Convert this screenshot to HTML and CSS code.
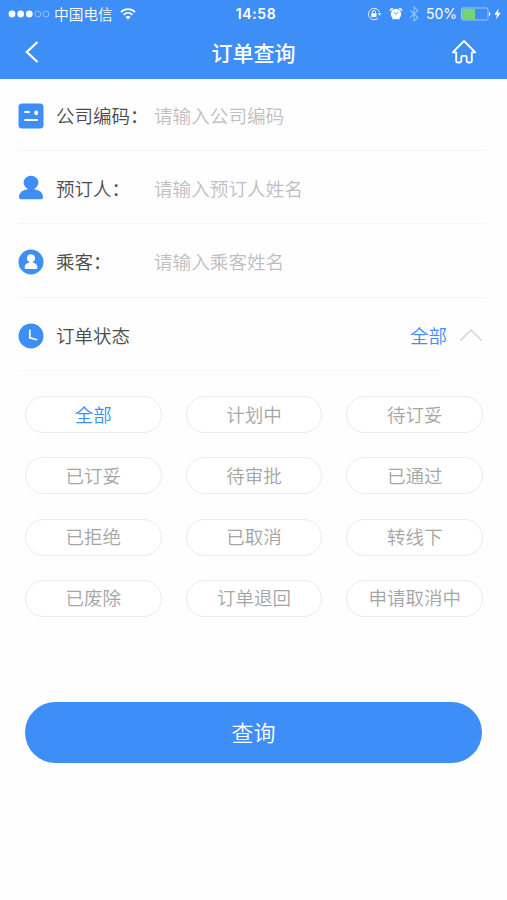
FILE: index.html
```
<!DOCTYPE html>
<html lang="zh-CN">
<head>
  <meta charset="UTF-8" />
  <meta name="viewport" content="width=device-width, initial-scale=1.0"/>
  <title>订单查询</title>
  <link rel="stylesheet" href="styles.css">
</head>
<body>
  <header class="header">
    <!-- Status bar -->
    <div class="status-bar">
      <div class="status-left">
        <svg class="signal" width="42" height="10" viewBox="0 0 42 10">
          <g fill="#fff"><circle cx="4" cy="5" r="3.4"/><circle cx="12.7" cy="5" r="3.4"/><circle cx="21.3" cy="5" r="3.4"/></g>
          <g fill="none" stroke="#a5ccff" stroke-width="0.8"><circle cx="29.8" cy="5" r="3"/><circle cx="38" cy="5" r="3"/></g>
        </svg>
        <span class="carrier">中国电信</span>
        <svg class="wifi" width="16" height="12" viewBox="0 0 16 12" fill="none" stroke="#fff" stroke-width="1.7">
          <path d="M1 4.2C5 .2 11 .2 15 4.2M3.6 6.8c2.6-2.5 6.2-2.5 8.8 0"/>
          <path d="M8 11.5 5.4 8.9c1.5-1.3 3.7-1.3 5.2 0z" fill="#fff" stroke="none"/>
        </svg>
      </div>
      <span class="time">14:58</span>
      <div class="status-right">
        <svg class="lock" width="15" height="14" viewBox="0 0 15 14" fill="none" stroke="#e4f0ff" stroke-width="1">
          <path d="M11 11.3A5.7 5.7 0 1 1 12.5 5"/>
          <path d="M10.6 6.3h3.8l-1.9 2.5z" fill="#fff" stroke="none"/>
          <path d="M5.3 6.5V5a1.6 1.6 0 0 1 3.2 0v1.5"/>
          <rect x="4.3" y="6.2" width="5.2" height="3.9" fill="#fff" stroke="none"/>
        </svg>
        <svg class="alarm" width="14" height="13" viewBox="0 0 14 13">
          <circle cx="7" cy="7" r="5.2" fill="#fff"/>
          <path d="M1.5 3.9a1.8 1.8 0 0 1 2.5-2M12.5 3.9a1.8 1.8 0 0 0-2.5-2" fill="none" stroke="#fff" stroke-width="1.6"/>
          <path d="M3.6 12.4l1-1.3M10.4 12.4l-1-1.3" stroke="#fff" stroke-width="1.3"/>
          <path d="M5.2 5.6 7 7.3l2.4-2.2" fill="none" stroke="#3e8ef7" stroke-width=".9"/>
        </svg>
        <svg class="bluetooth" width="10" height="16" viewBox="0 0 10 16" fill="none" stroke="#91c0ff" stroke-width="1.1">
          <path d="M1 4.5l8 7L5 15V1l4 3.5-8 7"/>
        </svg>
        <span class="percent">50%</span>
        <svg class="battery" width="30" height="14" viewBox="0 0 30 14">
          <rect x=".5" y="1" width="26.5" height="12" rx="1.5" fill="none" stroke="#9fc8ff" stroke-width="1"/>
          <rect x="1.2" y="1.8" width="12.8" height="10.4" fill="#75d572"/>
          <path d="M28 5v4c1.7-.3 1.7-3.7 0-4z" fill="#fff"/>
        </svg>
        <svg class="bolt" width="7" height="12" viewBox="0 0 7 12" fill="#fff">
          <path d="M4.6 0.5 0.3 6.8h2.6l-.8 4.7 4.6-6.7H4z"/>
        </svg>
      </div>
    </div>

    <!-- Title bar -->
    <div class="nav">
      <svg class="back" width="14" height="24" viewBox="0 0 14 24" fill="none" stroke="#fff" stroke-width="2.3">
        <path d="M12.5 2 1.8 12l10.7 10"/>
      </svg>
      <h1>订单查询</h1>
      <svg class="home" width="26" height="26" viewBox="0 0 26 26" fill="none" stroke="#fff" stroke-width="1.9" stroke-linejoin="round" stroke-linecap="round">
        <path d="M5.2 13.4H1.8L13 1.9l11.2 11.5h-3.4v8.6q0 1.5-1.5 1.5h-2.1q-1.5 0-1.5-1.5v-3.6q0-1.5-1.4-1.5h-2.6q-1.4 0-1.4 1.5V22q0 1.5-1.5 1.5H6.7q-1.5 0-1.5-1.5z"/>
      </svg>
    </div>
  </header>

  <main>
    <div class="row">
      <svg class="icon" width="26" height="26" viewBox="0 0 26 26">
        <rect x=".5" y=".5" width="25" height="25" rx="3.5" fill="#3e8ef7"/>
        <path d="M6.3 9h5.5M6.3 17h13.5" stroke="#fff" stroke-width="1.9"/>
        <ellipse cx="18.2" cy="9.8" rx="2" ry="2.4" fill="#fff"/>
      </svg>
      <label for="company">公司编码：</label>
      <input id="company" type="text" placeholder="请输入公司编码">
    </div>
    <div class="row">
      <svg class="icon" width="26" height="26" viewBox="0 0 26 26" fill="#3e8ef7">
        <ellipse cx="13" cy="7.4" rx="7.4" ry="6.7"/>
        <path d="M9.5 12h7v2.2c5.2.8 8.5 3.6 8.5 7.8 0 1.5-1 2.3-2.5 2.3h-19C2 24.3 1 23.5 1 22c0-4.2 3.3-7 8.5-7.8z"/>
      </svg>
      <label for="booker">预订人：</label>
      <input id="booker" type="text" placeholder="请输入预订人姓名">
    </div>
    <div class="row">
      <svg class="icon" width="26" height="26" viewBox="0 0 26 26">
        <circle cx="13" cy="13" r="12.5" fill="#3e8ef7"/>
        <ellipse cx="13" cy="9.3" rx="4" ry="4.1" fill="#fff"/>
        <path d="M11.2 12h3.6v1.8c3 .5 4.6 2.2 4.6 4.6q0 1.5-1.5 1.5H8.1q-1.5 0-1.5-1.5c0-2.4 1.6-4.1 4.6-4.6z" fill="#fff"/>
      </svg>
      <label for="passenger">乘客：</label>
      <input id="passenger" type="text" placeholder="请输入乘客姓名">
    </div>
    <div class="row row-status">
      <svg class="icon" width="26" height="26" viewBox="0 0 26 26">
        <circle cx="13" cy="13" r="12.5" fill="#3e8ef7"/>
        <path d="M11.8 6.8v8l7.4 2" fill="none" stroke="#fff" stroke-width="1.7"/>
      </svg>
      <span class="label">订单状态</span>
      <span class="current">全部</span>
      <svg class="arrow" width="24" height="14" viewBox="0 0 24 14" fill="none" stroke="#d4d4d4" stroke-width="1.5">
        <path d="M1.5 12.5 12 2l10.5 10.5"/>
      </svg>
    </div>

    <div class="options">
      <button class="option active">全部</button>
      <button class="option">计划中</button>
      <button class="option">待订妥</button>
      <button class="option">已订妥</button>
      <button class="option">待审批</button>
      <button class="option">已通过</button>
      <button class="option">已拒绝</button>
      <button class="option">已取消</button>
      <button class="option">转线下</button>
      <button class="option">已废除</button>
      <button class="option">订单退回</button>
      <button class="option">申请取消中</button>
    </div>

    <button class="submit">查询</button>
  </main>
</body>
</html>
```
FILE: styles.css
```
* {
  box-sizing: border-box;
}

body {
  margin: 0;
  min-height: 900px;
  font-family: "Noto Sans CJK SC", sans-serif;
  font-weight: 350;
  background: #fefefe;
  color: #4c4c4c;
}

button,
input {
  font-family: inherit;
  font-weight: inherit;
  padding: 0;
}

svg {
  display: block;
  flex: none;
}

.header {
  height: 79px;
  background: #3e8ef7;
  color: #fff;
}

.status-bar {
  display: grid;
  grid-template-columns: 1fr auto 1fr;
  align-items: center;
  height: 27px;
  padding: 0 6px 0 8px;
}

.status-left,
.status-right {
  display: flex;
  align-items: center;
}

.status-right {
  justify-content: flex-end;
}

.carrier {
  margin-left: 4px;
  font-size: 14.7px;
  line-height: 27px;
}

.wifi {
  margin-left: 7px;
}

.time {
  margin-left: 3px;
  font-family: Inter, sans-serif;
  font-size: 14px;
  font-weight: 600;
  letter-spacing: 0.6px;
}

.alarm {
  margin-left: 7px;
}

.bluetooth {
  margin-left: 6px;
}

.percent {
  margin-left: 7px;
  font-family: Inter, sans-serif;
  font-size: 14px;
  font-weight: 400;
}

.battery {
  margin-left: 4px;
}

.bolt {
  margin-left: 3px;
}

.nav {
  display: grid;
  grid-template-columns: 1fr auto 1fr;
  align-items: center;
  height: 50px;
  padding: 0 30px 0 25px;
}

.nav h1 {
  margin: 0 0 0 5px;
  font-size: 21px;
  font-weight: 500;
  line-height: 50px;
}

.home {
  justify-self: end;
}

.row {
  display: flex;
  align-items: center;
  height: 73.4px;
  margin: 0 20px 0 18px;
  padding-top: 1.5px;
  border-bottom: 1px solid #f5f5f5;
}

.row:first-child {
  height: 72px;
}

.icon {
  margin-top: 1px;
}

.row label,
.row .label {
  width: 98px;
  margin-left: 12px;
  font-size: 18.5px;
  white-space: nowrap;
}

/* half-width colon */
.row label {
  font-feature-settings: "halt";
}

.row input {
  flex: 1;
  min-width: 0;
  height: 40px;
  padding-bottom: 1px;
  border: none;
  outline: none;
  background: none;
  font-size: 18.6px;
}

.row input::placeholder {
  color: #bfbfc3;
}

.row-status {
  margin-right: 24px;
  border-bottom: none;
  background: linear-gradient(#f7f7f7, #f7f7f7) left bottom / 422px 1px no-repeat;
}

.current {
  margin-left: auto;
  color: #3e8ef7;
  font-size: 18.5px;
}

.arrow {
  margin-left: 12px;
}

.options {
  display: grid;
  grid-template-columns: repeat(3, 1fr);
  gap: 24.2px;
  padding: 25px 24px 0 25px;
}

.option {
  height: 37px;
  padding-bottom: 1px;
  border: 1.5px solid #ebebeb;
  border-radius: 19px;
  background: #fff;
  color: #a5a5a5;
  font-size: 18.5px;
  line-height: 33px;
}

.option.active {
  color: #3e8ef7;
}

.submit {
  display: block;
  width: 457px;
  height: 61px;
  margin: 85px 0 0 25px;
  padding-bottom: 3px;
  border: none;
  border-radius: 31px;
  background: #3e8ef7;
  color: #fff;
  font-size: 22px;
}
```
